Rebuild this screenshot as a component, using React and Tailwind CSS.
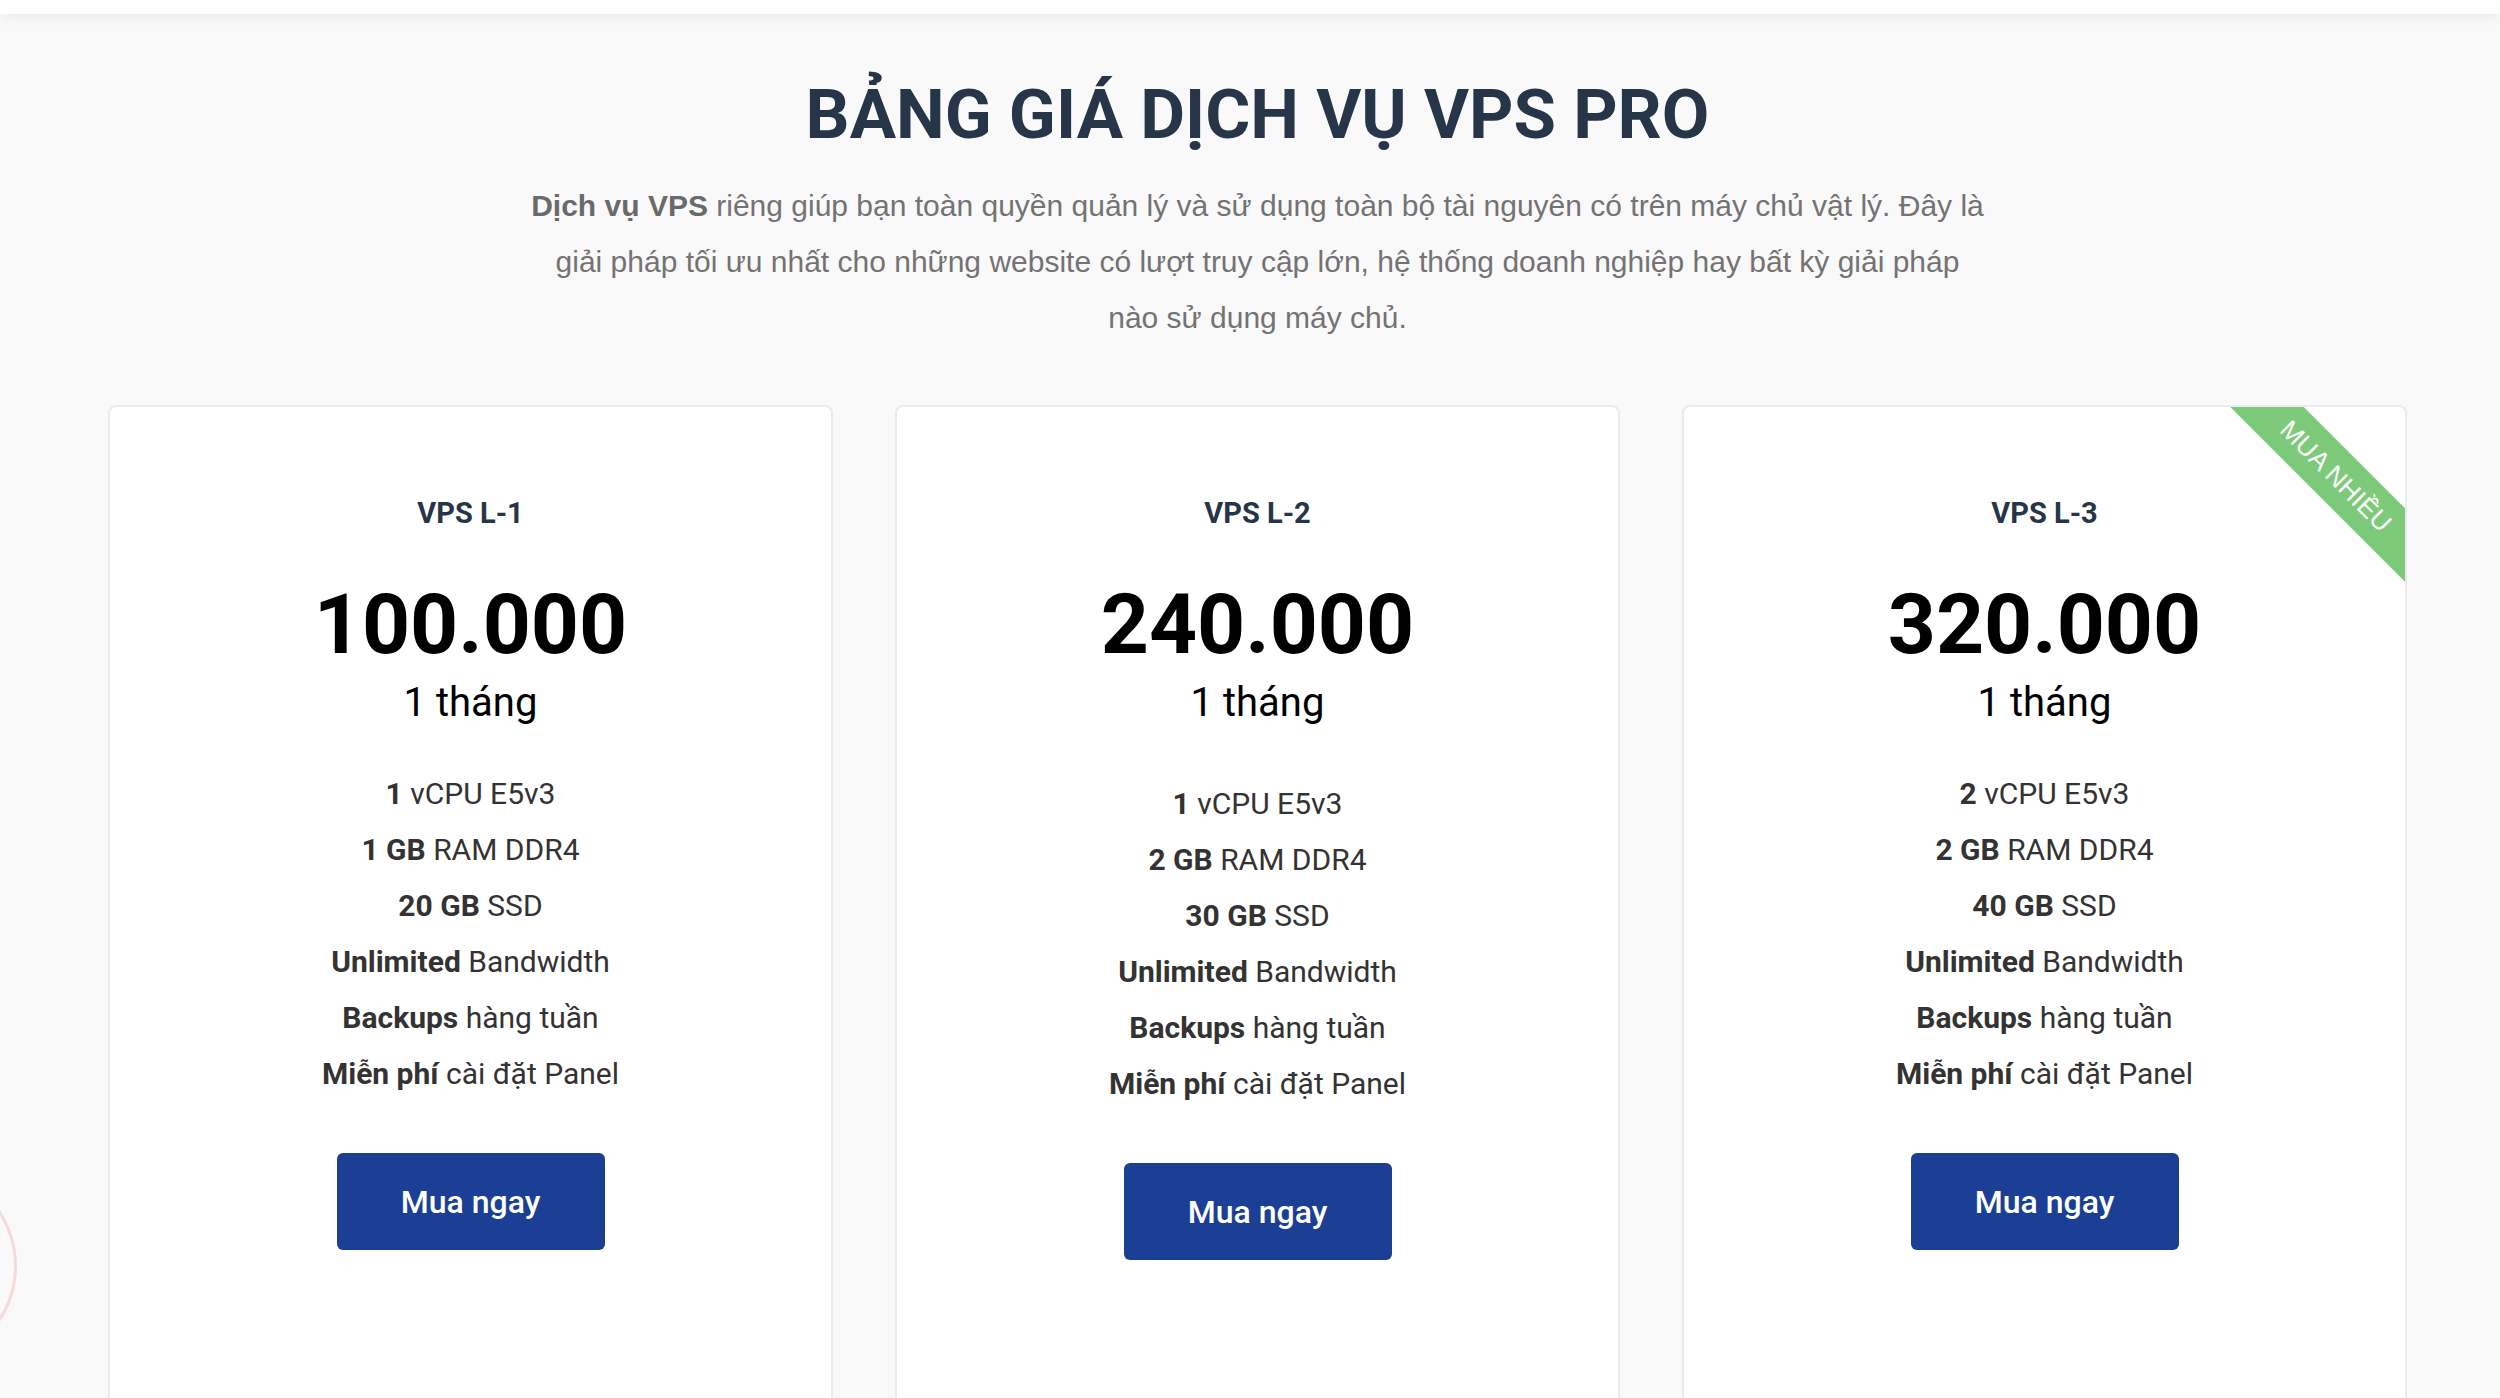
import React from 'react';

const plans = [
  {
    name: 'VPS L-1',
    price: '100.000',
    specs: [
      ['1', ' vCPU E5v3'],
      ['1 GB', ' RAM DDR4'],
      ['20 GB', ' SSD'],
    ],
  },
  {
    name: 'VPS L-2',
    price: '240.000',
    shifted: true,
    specs: [
      ['1', ' vCPU E5v3'],
      ['2 GB', ' RAM DDR4'],
      ['30 GB', ' SSD'],
    ],
  },
  {
    name: 'VPS L-3',
    price: '320.000',
    ribbon: 'MUA NHIỀU',
    specs: [
      ['2', ' vCPU E5v3'],
      ['2 GB', ' RAM DDR4'],
      ['40 GB', ' SSD'],
    ],
  },
];

// các dòng chung cho mọi gói
const extras = [
  ['Unlimited', ' Bandwidth'],
  ['Backups', ' hàng tuần'],
  ['Miễn phí', ' cài đặt Panel'],
];

const PlanCard = ({ plan }) => {
  const rows = [...plan.specs, ...extras];
  return (
    <div className="relative bg-white border-2 border-[#e8ebf1] rounded-[8px] overflow-hidden h-[1100px] flex flex-col items-center pt-[89px]">
      {plan.ribbon && (
        <div className="absolute top-[43px] right-[-81px] w-[300px] h-[52px] rotate-45 bg-[#7dcb7a] flex items-center justify-center text-white text-[26px] font-['Liberation_Sans',Arial,sans-serif]">
          {plan.ribbon}
        </div>
      )}
      <h3 className="text-[29px] leading-[34px] font-bold text-[#263548]">{plan.name}</h3>
      <div className="mt-[53px] text-[84px] leading-[84px] font-bold text-black">{plan.price}</div>
      <div className="mt-[12px] text-[40px] leading-[48px] text-black">1 tháng</div>
      <ul className={`${plan.shifted ? 'mt-[49px]' : 'mt-[39px]'} flex flex-col items-center text-[30px] leading-[56px] text-[#333333]`}>
        {rows.map(([b, rest], i) => (
          <li key={i}>
            <span className="font-bold">{b}</span>
            {rest}
          </li>
        ))}
      </ul>
      <button className="mt-[51px] w-[268px] h-[97px] rounded-[6px] bg-[#1a3f94] text-white text-[32px] font-medium">
        Mua ngay
      </button>
    </div>
  );
};

export default function App() {
  return (
    <div className="relative h-[1398px] overflow-hidden bg-[#f9f9f9] font-['Roboto',sans-serif]">
      <div className="h-[14px] bg-white shadow-[0_2px_14px_rgba(0,0,0,0.07)]" />

      {/* nút nổi bên trái */}
      <div className="absolute left-[-183px] top-[1166px] w-[200px] h-[200px] rounded-full border-[3px] border-[#f4dada]" />

      <div className="pl-[108px] pr-[93px]">
        <h1 className="mt-[61px] text-center text-[69px] leading-[80px] font-bold text-[#263548]">
          BẢNG GIÁ DỊCH VỤ VPS PRO
        </h1>
        <p className="mt-[23px] text-center text-[30px] leading-[56px] text-[#737373] font-['Liberation_Sans',Arial,sans-serif]">
          <span className="font-bold text-[#6a6a6a]">Dịch vụ VPS</span> riêng giúp bạn toàn quyền quản lý và sử dụng toàn bộ tài nguyên có trên máy chủ vật lý. Đây là
          <br />
          giải pháp tối ưu nhất cho những website có lượt truy cập lớn, hệ thống doanh nghiệp hay bất kỳ giải pháp
          <br />
          nào sử dụng máy chủ.
        </p>

        <div className="mt-[59px] grid grid-cols-3 gap-[62px]">
          {plans.map((p) => (
            <PlanCard key={p.name} plan={p} />
          ))}
        </div>
      </div>
    </div>
  );
}
